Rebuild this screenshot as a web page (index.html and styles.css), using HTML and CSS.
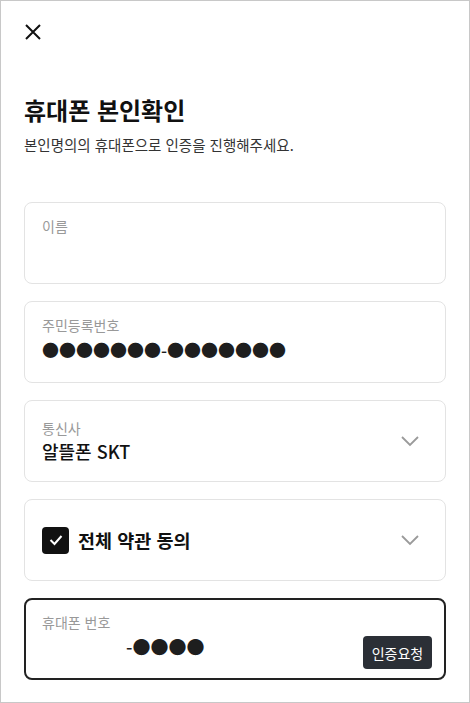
FILE: index.html
```html
<!DOCTYPE html>
<html lang="ko">
<head>
<meta charset="utf-8">
<link rel="stylesheet" href="styles.css">
</head>
<body>
<div class="screen">
  <header class="topbar">
    <button class="close" aria-label="닫기">
      <svg width="18" height="18" viewBox="0 0 18 18"><path d="M2 2L16 16M16 2L2 16" stroke="#111" stroke-width="2" fill="none"/></svg>
    </button>
  </header>
  <section class="intro">
    <h1 class="title">휴대폰 본인확인</h1>
    <p class="desc">본인명의의 휴대폰으로 인증을 진행해주세요.</p>
  </section>
  <div class="fields">
    <div class="card">
      <div class="label">이름</div>
      <div class="value"></div>
    </div>
    <div class="card">
      <div class="label">주민등록번호</div>
      <div class="value dots">●●●●●●●-●●●●●●●</div>
    </div>
    <div class="card row">
      <div class="col">
        <div class="label">통신사</div>
        <div class="value">알뜰폰 SKT</div>
      </div>
      <svg class="chev" width="20" height="12" viewBox="0 0 20 12"><path d="M2 2L10 10L18 2" stroke="#9a9a9a" stroke-width="1.8" fill="none"/></svg>
    </div>
    <div class="card row">
      <div class="agree">
        <span class="check"><svg width="14" height="12" viewBox="0 0 14 12"><path d="M1.5 6L5.5 10L12.5 2" stroke="#fff" stroke-width="2" fill="none"/></svg></span>
        <span class="agree-text">전체 약관 동의</span>
      </div>
      <svg class="chev" width="20" height="12" viewBox="0 0 20 12"><path d="M2 2L10 10L18 2" stroke="#9a9a9a" stroke-width="1.8" fill="none"/></svg>
    </div>
    <div class="card active">
      <div class="label">휴대폰 번호</div>
      <div class="phone-row">
        <div class="value dots phone">-●●●●</div>
        <button class="req">인증요청</button>
      </div>
    </div>
  </div>
</div>
</body>
</html>
```
FILE: styles.css
```css
* { box-sizing: border-box; }
html, body { margin: 0; padding: 0; background: #fff; }
body {
  font-family: "Noto Sans CJK KR", "Noto Sans", sans-serif;
  color: #111;
}
.screen {
  width: 470px;
  height: 703px;
  border: 1px solid #c8c8c8;
  padding: 0 23px;
  overflow: hidden;
}
.topbar {
  height: 64px;
  padding-top: 22px;
}
.close {
  border: 0;
  background: none;
  padding: 0;
  margin: 0;
  width: 18px;
  height: 18px;
  display: block;
}
.close svg { display: block; }
.intro { padding-top: 27px; }
.title {
  margin: 0;
  font-size: 24px;
  font-weight: 700;
  line-height: 36px;
  color: #111;
}
.desc {
  margin: 6px 0 0;
  font-size: 14.5px;
  line-height: 22px;
  color: #333;
}
.fields {
  margin-top: 46px;
  display: flex;
  flex-direction: column;
  gap: 17px;
}
.card {
  height: 82px;
  border: 1px solid #e3e3e3;
  border-radius: 8px;
  padding: 13px 17px 0;
}
.card.row {
  display: flex;
  align-items: center;
  justify-content: space-between;
  padding: 0 25px 0 17px;
}
.label {
  font-size: 14px;
  line-height: 20px;
  color: #999;
}
.value {
  font-size: 18px;
  line-height: 26px;
  font-weight: 500;
  color: #111;
}
.dots {
  font-size: 17px;
  margin-top: 2px;
  color: #1e1e1e;
}
.chev { display: block; }
.agree {
  display: flex;
  align-items: center;
  gap: 9px;
}
.check {
  width: 27px;
  height: 27px;
  border-radius: 4px;
  background: #111;
  display: flex;
  align-items: center;
  justify-content: center;
}
.check svg { display: block; }
.agree-text {
  font-size: 18.5px;
  font-weight: 700;
  color: #111;
}
.card.active {
  border: 2px solid #222;
  padding: 12px 12px 0 16px;
}
.phone-row {
  display: flex;
  align-items: flex-start;
  justify-content: space-between;
}
.phone {
  font-size: 18px;
  padding-left: 84px;
  margin-top: 1px;
}
.req {
  margin-top: 4px;
  width: 69px;
  height: 33px;
  border: 0;
  border-radius: 4px;
  background: #2b2f36;
  color: #fff;
  font-family: "Noto Sans CJK KR", sans-serif;
  font-size: 14px;
  padding: 0;
}
```
